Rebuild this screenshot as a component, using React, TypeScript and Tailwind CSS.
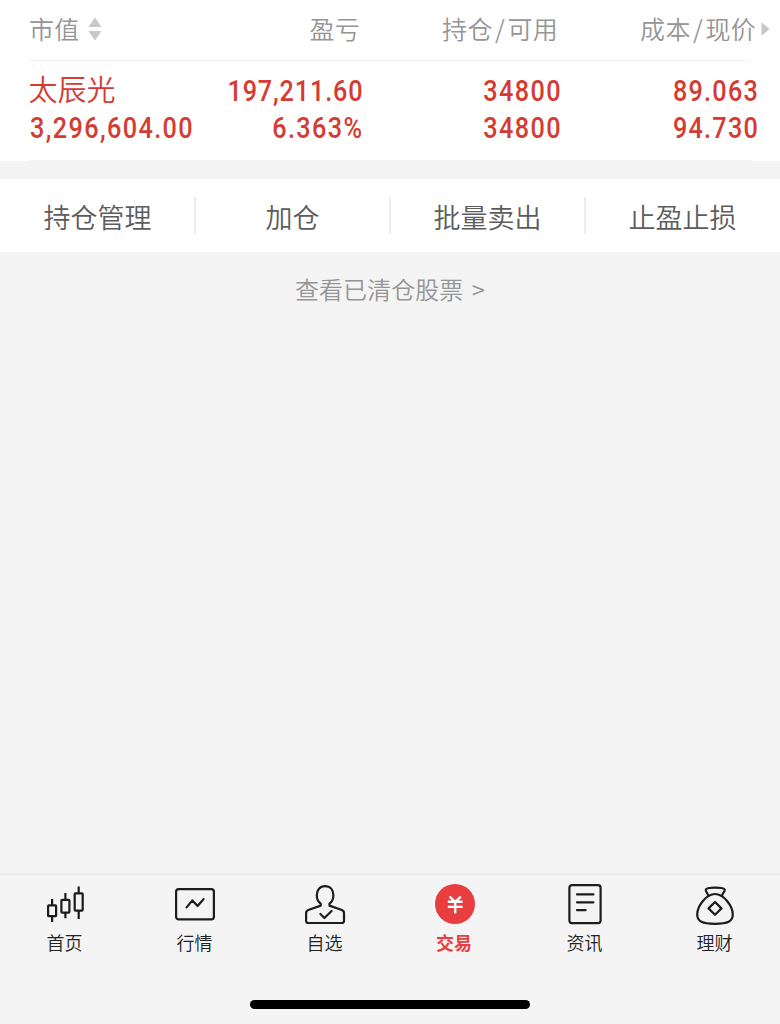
import type { ReactNode } from "react";

const CJK = "font-['Noto_Sans_CJK_SC',sans-serif]";

function Num({ children, tracking = "tracking-[1.6px]", left = false }: { children: ReactNode; tracking?: string; left?: boolean }) {
  return (
    <span
      className={`block whitespace-nowrap font-['Roboto',sans-serif] text-[29px] leading-[37px] font-medium scale-x-[0.87] ${tracking} ${
        left ? "origin-left" : "origin-right -mr-[2px] text-right"
      }`}
    >
      {children}
    </span>
  );
}

const stroke = {
  fill: "none",
  stroke: "#1c1c1c",
  strokeWidth: 2.2,
  strokeLinecap: "round" as const,
  strokeLinejoin: "round" as const,
};

const tabs: { label: string; icon: ReactNode; active?: boolean }[] = [
  {
    label: "首页",
    icon: (
      <g {...stroke} strokeLinecap="butt">
        <rect x="4.1" y="22.4" width="8" height="10.8" rx="0.8" />
        <path d="M8.1 16v6.4M8.1 33.2v5.8" />
        <rect x="17.4" y="16.8" width="8" height="12.8" rx="0.8" />
        <path d="M21.4 10v6.8M21.4 29.6v5.7" />
        <rect x="30.7" y="10.4" width="8" height="17.2" rx="0.8" />
        <path d="M34.7 3.5v6.9M34.7 27.6v8.3" />
      </g>
    ),
  },
  {
    label: "行情",
    icon: (
      <g {...stroke}>
        <rect x="2.1" y="6.1" width="37.8" height="30.3" rx="2.6" />
        <path d="M12.6 24.4L18.4 17.4L23.6 23L29.6 16.1" />
      </g>
    ),
  },
  {
    label: "自选",
    icon: (
      <g {...stroke}>
        <path d="M16.7 22.6V20.6C14 18.6 12.8 15.9 12.8 12.5C12.8 7 15.8 3.1 21.1 3.1S29.4 7 29.4 12.5C29.4 15.9 28.2 18.6 25.5 20.6V22.6L37.8 27Q40 27.9 40 30.1V37.7Q40 40 37.7 40H4.4Q2.1 40 2.1 37.7V30.1Q2.1 27.9 4.3 27Z" />
        <path d="M16.4 31L20.4 35L27.6 28" />
      </g>
    ),
  },
  {
    label: "交易",
    active: true,
    icon: (
      <g>
        <circle cx="21" cy="21" r="20" fill="#e93e40" />
        <path d="M15.6 13.6l5.6 5.2 5.6-5.2M13.8 18.8h14.8M13.8 23.9h14.8M21.2 18.2v12" fill="none" stroke="#fff" strokeWidth="2.4" />
      </g>
    ),
  },
  {
    label: "资讯",
    icon: (
      <g {...stroke}>
        <rect x="5.4" y="2.1" width="31.2" height="38" rx="2.6" />
        <path d="M13 11.4h16.4M13 19.3h16.4M13 27.2h8.6" />
      </g>
    ),
  },
  {
    label: "理财",
    icon: (
      <g {...stroke}>
        <path d="M14.2 12.8C13.6 9.7 11.2 8.5 11.8 6.5C12.7 4 29.8 4 30.7 6.5C31.3 8.5 28.6 9.7 28 12.8" />
        <path d="M21 11C12.5 11 3.2 22.7 3.2 31.6C3.2 38.6 8.4 40.8 21 40.8S38.8 38.6 38.8 31.6C38.8 22.7 29.5 11 21 11Z" />
        <path d="M21 19L27.5 25.4L21 31.8L14.5 25.4Z" />
      </g>
    ),
  },
];

export default function App() {
  return (
    <div className={`flex h-[1024px] w-[780px] flex-col overflow-hidden bg-[#f4f4f4] font-[350] ${CJK}`}>
      <section className="h-[161px] bg-white">
        <div className="mx-[29px] h-[61px] border-b border-[#f2f2f2]">
          <div className="-mr-[20px] flex h-[58px] items-center text-[25px] tracking-[0.3px] text-[#959595]">
            <div className="flex w-[120px] shrink-0 items-center gap-[8px]">
              市值
              <svg width="14" height="24" viewBox="0 0 14 24" fill="#c8c8c8">
                <path d="M7 0.5L13.5 10H0.5ZM7 23.5L13.5 14H0.5Z" />
              </svg>
            </div>
            <div className="w-[211px] shrink-0 text-right">盈亏</div>
            <div className="w-[198px] shrink-0 text-right">
              持仓<span className="px-[2.3px]">/</span>可用
            </div>
            <div className="w-[198px] shrink-0 text-right whitespace-nowrap">
              成本<span className="px-[2.3px]">/</span>现价
            </div>
            <svg className="ml-[5px] shrink-0" width="9" height="16" viewBox="0 0 9 16" fill="#c8c8c8">
              <path d="M0.5 1L8.5 8L0.5 15Z" />
            </svg>
          </div>
        </div>
        <div className="mx-[29px] flex h-[100px] border-b border-[#f4f4f4] pt-[11px] text-[#d43c33]">
          <div className="w-[164px] shrink-0 pl-[0.5px]">
            <div className="-ml-px h-[38px] text-[29px] leading-[32px]">太辰光</div>
            <Num left>3,296,604.00</Num>
          </div>
          <div className="w-[168.5px] shrink-0 pt-px">
            <Num tracking="tracking-[1px]">197,211.60</Num>
            <Num>6.363%</Num>
          </div>
          <div className="w-[198px] shrink-0 pt-px">
            <Num>34800</Num>
            <Num>34800</Num>
          </div>
          <div className="w-[197px] shrink-0 pt-px">
            <Num tracking="tracking-[1.4px]">89.063</Num>
            <Num tracking="tracking-[1.4px]">94.730</Num>
          </div>
        </div>
      </section>

      <section className="mt-[18px] grid h-[73px] grid-cols-4 items-center bg-white text-[27px] text-[#5c5c5c]">
        {["持仓管理", "加仓", "批量卖出", "止盈止损"].map((label, i) => (
          <div key={label} className="relative flex h-[37px] items-center justify-center pt-[3px]">
            {label}
            {i < 3 && <span className="absolute top-0 -right-px h-[37px] w-[2px] bg-[#ededed]" />}
          </div>
        ))}
      </section>

      <div className="mt-[19px] text-center text-[24px] leading-[36px] tracking-[0.05px] [word-spacing:3px] text-[#959595]">
        查看已清仓股票 &gt;
      </div>

      <nav className="mt-auto grid h-[151px] grid-cols-6 border-t-2 border-[#ebebeb] pt-[8px]">
        {tabs.map((t) => (
          <div key={t.label} className="flex flex-col items-center">
            <svg width="42" height="42" viewBox="0 0 42 42">
              {t.icon}
            </svg>
            <span
              className={`mt-[4px] text-[18px] leading-[26px] ${
                t.active ? "-ml-[2px] font-bold text-[#e93e40]" : "-ml-px text-[#222]"
              }`}
            >
              {t.label}
            </span>
          </div>
        ))}
        <div className="col-span-6 mx-auto mb-[15px] h-[9px] w-[280px] self-end rounded-full bg-black" />
      </nav>
    </div>
  );
}
